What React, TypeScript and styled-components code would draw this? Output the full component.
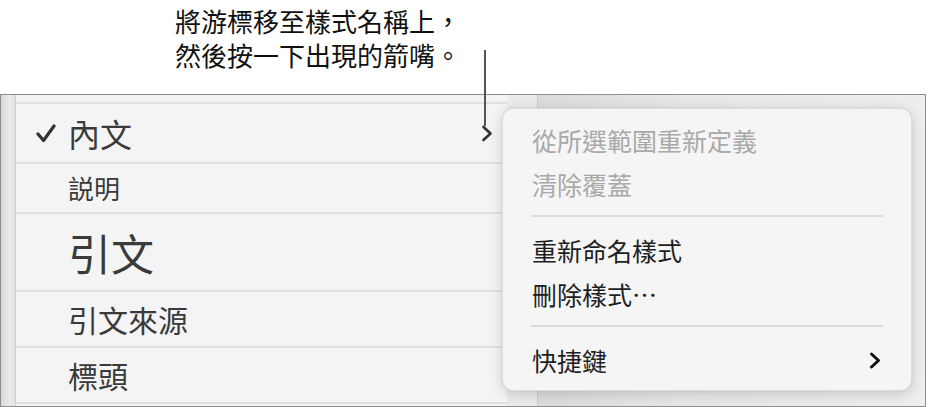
import React from 'react';
import styled, { createGlobalStyle } from 'styled-components';

const GlobalStyle = createGlobalStyle`
  html, body {
    margin: 0;
    padding: 0;
    background: #ffffff;
  }
  body {
    font-family: "Noto Sans CJK TC", "Noto Sans", sans-serif;
  }
`;

const Page = styled.div`
  position: relative;
  width: 928px;
  height: 407px;
  overflow: hidden;
  background: #ffffff;
`;

const Callout = styled.div`
  padding: 4px 0 0 175px;
  font-size: 26px;
  line-height: 34px;
  color: #111111;
  height: 68px;
`;

const Pointer = styled.div`
  position: absolute;
  left: 484px;
  top: 50px;
  width: 2px;
  height: 76px;
  background: #555555;
`;

const Frame = styled.div`
  margin-top: 22px;
  width: 924px;
  height: 311px;
  border: 1px solid #8e8e8e;
  display: grid;
  grid-template-columns: 15px 491px 31px 1fr;
`;

const Gutter = styled.div`
  background: linear-gradient(to right, #d9d9d9, #ebebeb 60%, #e2e2e2);
  border-right: 1px solid #cfcfcf;
`;

const ListPanel = styled.div`
  background: #f4f4f4;
  display: flex;
  flex-direction: column;
  padding-top: 7px;
`;

const Row = styled.div<{ $h: number }>`
  height: ${({ $h }) => $h}px;
  border-top: 2px solid #e0e0e0;
  display: flex;
  align-items: center;
  padding: 0 14px 0 20px;
  color: #3a3a3a;
  box-sizing: border-box;
  flex-shrink: 0;
`;

const CheckSlot = styled.div`
  width: 32px;
  display: flex;
  align-items: center;
`;

const RowLabel = styled.span<{ $size: number }>`
  font-size: ${({ $size }) => $size}px;
  line-height: 1;
  flex: 1;
`;

const GapColumn = styled.div`
  background: #ebebeb;
  border-right: 1px solid #cdcdcd;
`;

const Backdrop = styled.div`
  background: linear-gradient(to right, #dcdcdc, #e8e8e8 40%, #eeeeee);
`;

const Popup = styled.div`
  position: absolute;
  left: 502px;
  top: 108px;
  width: 410px;
  height: 283px;
  box-sizing: border-box;
  padding: 9px 0 8px;
  background: #f5f5f5;
  border-radius: 11px;
  border: 1px solid rgba(0, 0, 0, 0.1);
  box-shadow: 0 3px 14px rgba(0, 0, 0, 0.16), 0 0 2px rgba(0, 0, 0, 0.08);
  display: flex;
  flex-direction: column;
`;

const MenuItem = styled.div<{ $disabled?: boolean }>`
  height: 44px;
  display: flex;
  align-items: center;
  padding: 0 30px 0 29px;
  font-size: 25px;
  color: ${({ $disabled }) => ($disabled ? '#a9a9a9' : '#1e1e1e')};
  flex-shrink: 0;
`;

const MenuLabel = styled.span`
  flex: 1;
`;

const Separator = styled.div`
  height: 2px;
  background: #dddddd;
  margin: 9px 28px 11px;
  flex-shrink: 0;
`;

const Check = () => (
  <svg width="20" height="19" viewBox="0 0 20 19">
    <path d="M2 10 L7.5 16.5 L18 2" fill="none" stroke="#333" strokeWidth="3.2" strokeLinecap="round" strokeLinejoin="round" />
  </svg>
);

const Chevron = ({ color, w }: { color: string; w: number }) => (
  <svg width="12" height="17" viewBox="0 0 12 17">
    <path d="M2.5 2 L9.5 8.5 L2.5 15" fill="none" stroke={color} strokeWidth={w} strokeLinecap="round" strokeLinejoin="round" />
  </svg>
);

const styles = [
  { label: '內文', size: 32, h: 60, checked: true },
  { label: '説明', size: 26, h: 50 },
  { label: '引文', size: 43, h: 78 },
  { label: '引文來源', size: 30, h: 56 },
  { label: '標頭', size: 30, h: 56 },
];

export default function App() {
  return (
    <Page>
      <GlobalStyle />
      <Callout>
        將游標移至樣式名稱上，
        <br />
        然後按一下出現的箭嘴。
      </Callout>
      <Frame>
        <Gutter />
        <ListPanel>
          {styles.map((s) => (
            <Row key={s.label} $h={s.h}>
              <CheckSlot>{s.checked && <Check />}</CheckSlot>
              <RowLabel $size={s.size}>{s.label}</RowLabel>
              {s.checked && <Chevron color="#333" w={2.6} />}
            </Row>
          ))}
          <Row $h={4} />
        </ListPanel>
        <GapColumn />
        <Backdrop />
      </Frame>
      <Pointer />
      <Popup>
        <MenuItem $disabled>從所選範圍重新定義</MenuItem>
        <MenuItem $disabled>清除覆蓋</MenuItem>
        <Separator />
        <MenuItem>重新命名樣式</MenuItem>
        <MenuItem>刪除樣式⋯</MenuItem>
        <Separator />
        <MenuItem>
          <MenuLabel>快捷鍵</MenuLabel>
          <Chevron color="#111" w={3} />
        </MenuItem>
      </Popup>
    </Page>
  );
}
